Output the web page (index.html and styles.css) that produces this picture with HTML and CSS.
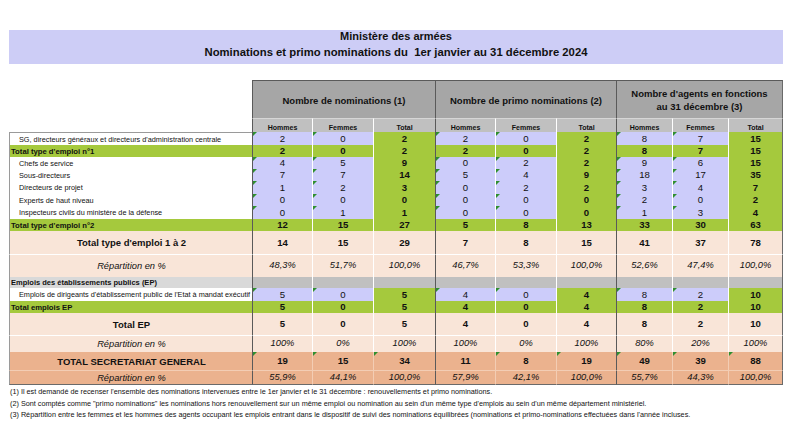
FILE: index.html
```html
<!DOCTYPE html>
<html lang="fr">
<head>
<meta charset="utf-8">
<title>Ministère des armées – Nominations 2024</title>
<link rel="stylesheet" href="styles.css">
</head>
<body>
<div class="page">
  <header class="title">
    <div class="t1">Ministère des armées</div>
    <div class="t2">Nominations et primo nominations du&nbsp; 1er janvier au 31 décembre 2024</div>
  </header>

  <div class="table">
    <div class="row hdr1">
      <div class="blank"></div>
      <div class="grp">Nombre de nominations (1)</div>
      <div class="grp">Nombre de primo nominations (2)</div>
      <div class="grp last">Nombre d'agents en fonctions<br>au 31 décembre (3)</div>
    </div>
    <div class="row hdr2">
      <div class="blank"></div>
      <div class="c h">Hommes</div><div class="c f">Femmes</div><div class="c f">Total</div>
      <div class="c h">Hommes</div><div class="c f">Femmes</div><div class="c f">Total</div>
      <div class="c h">Hommes</div><div class="c f">Femmes</div><div class="c f last">Total</div>
    </div>

    <div class="row r13 sg">
      <div class="lab ind">SG, directeurs généraux et directeurs d'administration centrale</div>
      <div class="c h lav tri">2</div><div class="c f lav tri">0</div><div class="c f grn b">2</div>
      <div class="c h lav tri">2</div><div class="c f lav tri">0</div><div class="c f grn b">2</div>
      <div class="c h lav tri">8</div><div class="c f lav tri">7</div><div class="c f grn b last">15</div>
    </div>
    <div class="row r12 total">
      <div class="lab">Total type d'emploi n°1</div>
      <div class="c h b">2</div><div class="c f b">0</div><div class="c f b">2</div>
      <div class="c h b">2</div><div class="c f b">0</div><div class="c f b">2</div>
      <div class="c h b">8</div><div class="c f b">7</div><div class="c f b last">15</div>
    </div>
    <div class="row r12">
      <div class="lab ind">Chefs de service</div>
      <div class="c h lav tri">4</div><div class="c f lav tri">5</div><div class="c f grn b">9</div>
      <div class="c h lav tri">0</div><div class="c f lav tri">2</div><div class="c f grn b">2</div>
      <div class="c h lav tri">9</div><div class="c f lav tri">6</div><div class="c f grn b last">15</div>
    </div>
    <div class="row r12">
      <div class="lab ind">Sous-directeurs</div>
      <div class="c h lav tri">7</div><div class="c f lav tri">7</div><div class="c f grn b">14</div>
      <div class="c h lav tri">5</div><div class="c f lav tri">4</div><div class="c f grn b">9</div>
      <div class="c h lav tri">18</div><div class="c f lav tri">17</div><div class="c f grn b last">35</div>
    </div>
    <div class="row r13">
      <div class="lab ind">Directeurs de projet</div>
      <div class="c h lav tri">1</div><div class="c f lav tri">2</div><div class="c f grn b">3</div>
      <div class="c h lav tri">0</div><div class="c f lav tri">2</div><div class="c f grn b">2</div>
      <div class="c h lav tri">3</div><div class="c f lav tri">4</div><div class="c f grn b last">7</div>
    </div>
    <div class="row r12">
      <div class="lab ind">Experts de haut niveau</div>
      <div class="c h lav tri">0</div><div class="c f lav tri">0</div><div class="c f grn b">0</div>
      <div class="c h lav tri">0</div><div class="c f lav tri">0</div><div class="c f grn b">0</div>
      <div class="c h lav tri">2</div><div class="c f lav tri">0</div><div class="c f grn b last">2</div>
    </div>
    <div class="row r13">
      <div class="lab ind">Inspecteurs civils du ministère de la défense</div>
      <div class="c h lav tri">0</div><div class="c f lav tri">1</div><div class="c f grn b">1</div>
      <div class="c h lav tri">0</div><div class="c f lav tri">0</div><div class="c f grn b">0</div>
      <div class="c h lav tri">1</div><div class="c f lav tri">3</div><div class="c f grn b last">4</div>
    </div>
    <div class="row r12 total">
      <div class="lab">Total type d'emploi n°2</div>
      <div class="c h b">12</div><div class="c f b">15</div><div class="c f b">27</div>
      <div class="c h b">5</div><div class="c f b">8</div><div class="c f b">13</div>
      <div class="c h b">33</div><div class="c f b">30</div><div class="c f b last">63</div>
    </div>

    <div class="row r23 peach">
      <div class="lab big">Total type d'emploi 1 à 2</div>
      <div class="c h b">14</div><div class="c f b">15</div><div class="c f b">29</div>
      <div class="c h b">7</div><div class="c f b">8</div><div class="c f b">15</div>
      <div class="c h b">41</div><div class="c f b">37</div><div class="c f b last">78</div>
    </div>
    <div class="row r23 peach sep">
      <div class="lab pct">Répartition en %</div>
      <div class="c h i">48,3%</div><div class="c f i">51,7%</div><div class="c f i">100,0%</div>
      <div class="c h i">46,7%</div><div class="c f i">53,3%</div><div class="c f i">100,0%</div>
      <div class="c h i">52,6%</div><div class="c f i">47,4%</div><div class="c f i last">100,0%</div>
    </div>

    <div class="row r11 section">
      <div class="lab">Emplois des établissements publics (EP)</div>
      <div class="c h"></div><div class="c f"></div><div class="c f"></div>
      <div class="c h"></div><div class="c f"></div><div class="c f"></div>
      <div class="c h"></div><div class="c f"></div><div class="c f last"></div>
    </div>
    <div class="row r13">
      <div class="lab ind">Emplois de dirigeants d'établissement public de l'Etat à mandat exécutif</div>
      <div class="c h lav tri">5</div><div class="c f lav tri">0</div><div class="c f grn b">5</div>
      <div class="c h lav tri">4</div><div class="c f lav tri">0</div><div class="c f grn b">4</div>
      <div class="c h lav tri">8</div><div class="c f lav tri">2</div><div class="c f grn b last">10</div>
    </div>
    <div class="row r12 total">
      <div class="lab">Total emplois EP</div>
      <div class="c h b">5</div><div class="c f b">0</div><div class="c f b">5</div>
      <div class="c h b">4</div><div class="c f b">0</div><div class="c f b">4</div>
      <div class="c h b">8</div><div class="c f b">2</div><div class="c f b last">10</div>
    </div>

    <div class="row r22 peach">
      <div class="lab big">Total EP</div>
      <div class="c h b">5</div><div class="c f b">0</div><div class="c f b">5</div>
      <div class="c h b">4</div><div class="c f b">0</div><div class="c f b">4</div>
      <div class="c h b">8</div><div class="c f b">2</div><div class="c f b last">10</div>
    </div>
    <div class="row r17 peach sep">
      <div class="lab pct">Répartition en %</div>
      <div class="c h i">100%</div><div class="c f i">0%</div><div class="c f i">100%</div>
      <div class="c h i">100%</div><div class="c f i">0%</div><div class="c f i">100%</div>
      <div class="c h i">80%</div><div class="c f i">20%</div><div class="c f i last">100%</div>
    </div>

    <div class="row r18 orange">
      <div class="lab big">TOTAL SECRETARIAT GENERAL</div>
      <div class="c h b tri">19</div><div class="c f b tri">15</div><div class="c f b tri">34</div>
      <div class="c h b">11</div><div class="c f b tri">8</div><div class="c f b tri">19</div>
      <div class="c h b tri">49</div><div class="c f b tri">39</div><div class="c f b tri last">88</div>
    </div>
    <div class="row r15 orange sep bottom">
      <div class="lab pct">Répartition en %</div>
      <div class="c h i">55,9%</div><div class="c f i">44,1%</div><div class="c f i">100,0%</div>
      <div class="c h i">57,9%</div><div class="c f i">42,1%</div><div class="c f i">100,0%</div>
      <div class="c h i">55,7%</div><div class="c f i">44,3%</div><div class="c f i last">100,0%</div>
    </div>
  </div>

  <div class="notes">
    <p>(1) Il est demandé de recenser l'ensemble des nominations intervenues entre le 1er janvier et le 31 décembre : renouvellements et primo nominations.</p>
    <p>(2) Sont comptés comme "primo nominations" les nominations hors renouvellement sur un même emploi ou nomination au sein d'un même type d'emplois au sein d'un même département ministériel.</p>
    <p>(3) Répartition entre les femmes et les hommes des agents occupant les emplois entrant dans le dispositif de suivi des nominations équilibrées (nominations et primo-nominations effectuées dans l'année incluses.</p>
  </div>
</div>
</body>
</html>
```
FILE: styles.css
```css
* { box-sizing: border-box; }
html, body { margin: 0; padding: 0; background: #fff; }
body {
  font-family: "Liberation Sans", Arial, sans-serif;
  color: #111;
  width: 792px;
  height: 445px;
  overflow: hidden;
}
.page { padding: 30px 9px 0 9px; }

.title {
  width: 774px;
  height: 34px;
  background: #cdcdf6;
  display: flex;
  flex-direction: column;
  align-items: center;
  font-weight: bold;
  padding-top: 0;
}
.title .t1 { font-size: 11px; line-height: 13px; }
.title .t2 { font-size: 11.3px; line-height: 18px; }

.table { margin-top: 16px; width: 774px; }

.row {
  display: grid;
  grid-template-columns: 243px 60px 61px 62px 60px 61px 60px 56px 56px 55px;
}
.r11 { height: 11px; }
.r12 { height: 12px; }
.r13 { height: 13px; }
.r15 { height: 15px; }
.r17 { height: 17px; }
.r18 { height: 18px; }
.r22 { height: 22px; }
.r23 { height: 23px; }

.c {
  position: relative;
  display: flex;
  align-items: center;
  justify-content: center;
  font-size: 9.6px;
  line-height: 1;
  white-space: nowrap;
}
.h { border-left: 1px solid #5a5a5a; }
.f { border-left: 1px solid #fff; }
.last { border-right: 1px solid #6a6a6a; }
.b { font-weight: bold; }
.i { font-style: italic; font-size: 9.3px; }

.lav { background: #ccccfa; }
.grn { background: #a5c93d; }

.tri::before {
  content: "";
  position: absolute;
  left: 0;
  top: 0;
  border-top: 4px solid #2f8f2f;
  border-right: 4px solid transparent;
}

/* header */
.hdr1 { height: 38px; }
.hdr1 .blank { background: #fff; }
.grp {
  grid-column: span 3;
  background: #a6a6a6;
  border-top: 1px solid #5a5a5a;
  border-left: 1px solid #5a5a5a;
  display: flex;
  align-items: center;
  justify-content: center;
  text-align: center;
  font-weight: bold;
  font-size: 9.5px;
  line-height: 13px;
  padding-top: 1px;
}
.hdr2 { height: 14px; }
.hdr2 .c {
  background: #c0c0c0;
  border-top: 1px solid #d6d6d6;
  font-weight: bold;
  font-size: 7px;
  padding-top: 3px;
}

/* labels */
.lab {
  display: flex;
  align-items: center;
  background: #fff;
  border-left: 1px solid #9a9a9a;
  font-size: 7.3px;
  white-space: nowrap;
  padding-left: 1px;
}
.lab.ind { padding-left: 9px; }
.sg .lab { border-top: 1px solid #9a9a9a; }

.total > * { background: #a5c93d; }
.total .lab { font-weight: bold; font-size: 7.7px; }

.peach > * { background: #f9e5d8; }
.peach .f { border-left-color: #fff; }
.orange > * { background: #ebb28e; }
.orange .f { border-left-color: #f3cdb4; }
.sep > * { border-top: 1px solid #fff; }
.orange.sep > * { border-top-color: #f3cdb4; }
.bottom > * { border-bottom: 1px solid #6a6a6a; }

.lab.big {
  justify-content: center;
  font-weight: bold;
  font-size: 9.5px;
}
.lab.pct {
  justify-content: center;
  font-style: italic;
  font-size: 9.3px;
}

.section .lab { background: #d9d9d9; font-weight: bold; font-size: 7.5px; }
.section .c { background: #c0c0c0; }

/* notes */
.notes { padding-left: 1px; padding-top: 1px; }
.notes p {
  margin: 0;
  font-size: 7.25px;
  line-height: 11.5px;
  white-space: nowrap;
}
```
